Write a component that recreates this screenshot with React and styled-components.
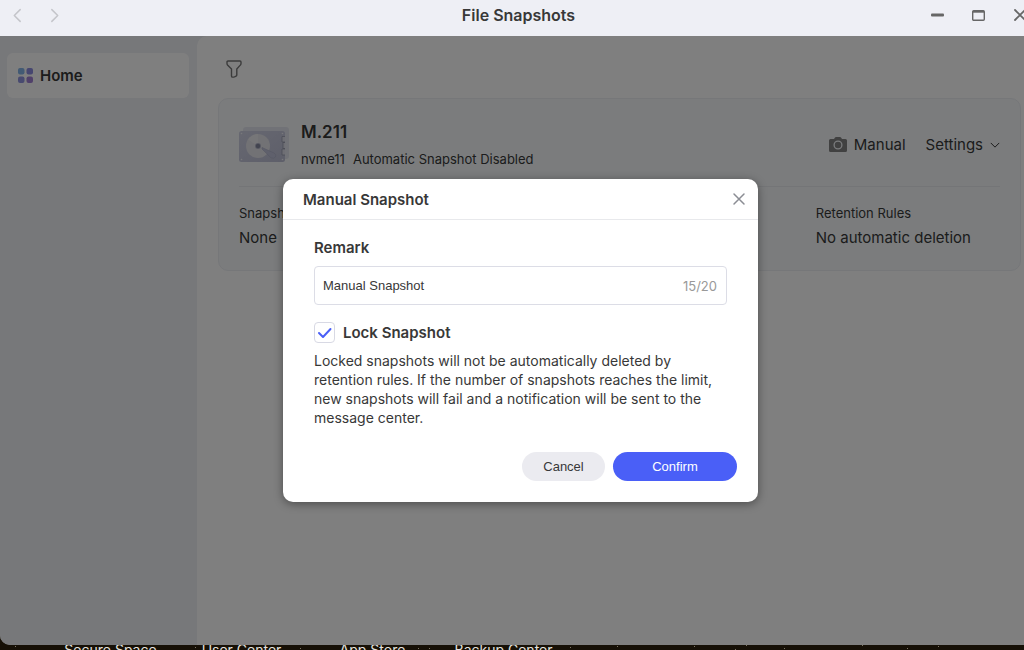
import { useState } from "react";
import styled, { createGlobalStyle } from "styled-components";

const GlobalStyle = createGlobalStyle`
  * {
    box-sizing: border-box;
  }
  body {
    margin: 0;
    font-family: Inter, "Noto Sans", sans-serif;
    font-size: 13px;
    color: #383838;
  }
  h1, h2, h3, p, dl, dd {
    margin: 0;
  }
  button {
    border: none;
    background: none;
    padding: 0;
    cursor: pointer;
    color: inherit;
  }
  svg {
    display: block;
    flex: none;
  }
`;

const Desktop = styled.div`
  display: flex;
  flex-direction: column;
  height: 100vh;
  overflow: hidden;
  background: #161006;
`;

/* the window is dragged a little past the right edge of the desktop */
const Window = styled.div`
  display: flex;
  flex-direction: column;
  flex: 1;
  min-height: 0;
  width: calc(100% + 17px);
  border-radius: 0 0 10px 10px;
  overflow: hidden;
`;

const TitleBar = styled.header`
  display: grid;
  grid-template-columns: 1fr auto 1fr;
  align-items: center;
  height: 36px;
  padding: 0 14px 6px 10px;
  background: #eeeff5;
`;
const BarGroup = styled.div`
  display: flex;
  align-items: center;
  gap: ${(props) => props.$gap};
  justify-content: ${(props) => (props.$end ? "flex-end" : "flex-start")};
`;
const BarButton = styled.button`
  color: ${(props) => props.$color || "#666"};
`;
const Title = styled.h1`
  font-size: 16px;
  font-weight: 600;
  line-height: 20px;
`;

const Body = styled.div`
  position: relative;
  display: flex;
  flex: 1;
  min-height: 0;
  background: #eef0f4;
`;
const Sidebar = styled.nav`
  width: 197px;
  padding: 17px 8px 0 7px;
`;
const NavItem = styled.a`
  display: flex;
  align-items: center;
  gap: 7px;
  height: 45px;
  padding: 0 11px;
  border-radius: 6px;
  background: #fff;
  color: #383838;
  font-size: 15px;
  font-weight: 600;
  text-decoration: none;
`;
const Content = styled.main`
  flex: 1;
  padding: 24px 20px 0 21px;
  border-radius: 10px 0 0 0;
  background: #fff;
`;
const FilterButton = styled.button`
  display: block;
  margin: 0 0 20px 8px;
  color: #777;
`;

const Card = styled.section`
  padding: 22px 20px;
  border: 1px solid #eceff3;
  border-radius: 10px;
  background: #f6f8fb;
`;
const CardHead = styled.div`
  display: flex;
  align-items: center;
  gap: 12px;
  padding-bottom: 17px;
  border-bottom: 1px solid #e8eaee;
`;
const Names = styled.div`
  display: flex;
  flex-direction: column;
  gap: 6px;
  flex: 1;
`;
const DiskName = styled.h2`
  font-size: 17px;
  font-weight: 600;
  line-height: 22px;
`;
const DiskInfo = styled.p`
  display: flex;
  gap: 8px;
  line-height: 20px;
`;
const Actions = styled.div`
  display: flex;
  gap: 20px;
`;
const ActionButton = styled.button`
  display: flex;
  align-items: center;
  gap: 7px;
  font-family: inherit;
  font-size: 15px;
  line-height: 20px;
`;
const Facts = styled.dl`
  display: grid;
  grid-template-columns: repeat(4, 1fr);
  gap: 8px;
  padding: 16px 0 0;
`;
const Fact = styled.div`
  grid-column: ${(props) => props.$column};
  display: flex;
  flex-direction: column;
  gap: 5px;
  line-height: 20px;
`;
const FactValue = styled.dd`
  font-size: 15px;
`;

const Mask = styled.div`
  position: absolute;
  inset: 0;
  display: flex;
  align-items: center;
  justify-content: center;
  background: rgba(0, 0, 0, 0.5);
`;
const Dialog = styled.form`
  width: 475px;
  border-radius: 10px;
  background: #fff;
  box-shadow: 0 2px 10px rgba(0, 0, 0, 0.4);
`;
const DialogHead = styled.div`
  display: flex;
  align-items: center;
  justify-content: space-between;
  height: 41px;
  padding: 0 12px 0 20px;
  border-bottom: 1px solid #e8e9ec;
`;
const DialogTitle = styled.h2`
  font-size: 15px;
  font-weight: 600;
`;
const DialogBody = styled.div`
  padding: 18px 31px 0;
`;
const FieldLabel = styled.label`
  display: block;
  font-size: 15px;
  font-weight: 600;
  line-height: 20px;
`;
const InputBox = styled.div`
  display: flex;
  align-items: center;
  height: 39px;
  margin: 8px 0 17px;
  padding: 0 9px 0 8px;
  border: 1px solid #dcdde6;
  border-radius: 4px;
`;
const TextInput = styled.input`
  flex: 1;
  min-width: 0;
  padding: 0;
  border: none;
  outline: none;
  color: #383838;
  font-family: "Liberation Sans", Arial, sans-serif;
  font-size: 13px;
`;
const Counter = styled.span`
  color: #999;
`;
const CheckRow = styled.div`
  display: flex;
  align-items: center;
  gap: 8px;
`;
const CheckBox = styled.span`
  display: grid;
  place-items: center;

  > * {
    grid-area: 1 / 1;
  }
  svg {
    pointer-events: none;
  }
  input:not(:checked) + svg {
    visibility: hidden;
  }
`;
const CheckInput = styled.input`
  appearance: none;
  width: 21px;
  height: 21px;
  margin: 0;
  border: 1px solid #d8d9e4;
  border-radius: 4px;
`;
const Hint = styled.p`
  margin-top: 8px;
  font-size: 14px;
  line-height: 19px;
`;
const DialogFoot = styled.div`
  display: flex;
  justify-content: flex-end;
  gap: 8px;
  padding: 25px 21px 21px;
`;
const PillButton = styled.button`
  width: ${(props) => (props.$primary ? "124px" : "83px")};
  height: 29px;
  border-radius: 15px;
  background: ${(props) => (props.$primary ? "#4a5ff7" : "#ebebf0")};
  color: ${(props) => (props.$primary ? "#fff" : "#383838")};
  font-family: "Liberation Sans", Arial, sans-serif;
  font-size: 13px;
`;

const Dock = styled.footer`
  position: relative;
  display: flex;
  height: 5px;
  padding-left: 45px;
  overflow: hidden;
`;
const DockLabel = styled.span`
  width: 131px;
  margin-top: -4px;
  color: #e4e2df;
  font-size: 14px;
  line-height: 18px;
  text-align: center;
`;
const Stars = styled.svg`
  position: absolute;
  inset: 0;
  width: 100%;
  height: 5px;
`;

const apps = ["Secure Space", "User Center", "App Store", "Backup Center"];
const stars = [
  [15, 1], [195, 2], [300, 3], [418, 3], [429, 3], [570, 2], [617, 1], [694, 1],
  [735, 4], [746, 0], [784, 3], [862, 0], [907, 3], [938, 1],
];

function Chevron({ d, size }) {
  return (
    <svg width={size} height={size} viewBox="0 0 14 14" fill="none" stroke="currentColor" strokeWidth="1.4" strokeLinecap="round" strokeLinejoin="round">
      <path d={d} />
    </svg>
  );
}

function Cross({ size, width }) {
  return (
    <svg width={size} height={size} viewBox="0 0 14 14" fill="none" stroke="currentColor" strokeWidth={width} strokeLinecap="round">
      <path d="M2 2l10 10M12 2L2 12" />
    </svg>
  );
}

function HomeIcon() {
  return (
    <svg width="15" height="15" viewBox="0 0 15 15">
      <rect width="6.5" height="6.5" rx="2" fill="#84b4e8" />
      <rect x="8.5" width="6.5" height="6.5" rx="2" fill="#8c8ce0" />
      <rect y="8.5" width="6.5" height="6.5" rx="2" fill="#9094e0" />
      <rect x="8.5" y="8.5" width="6.5" height="6.5" rx="2" fill="#a080d4" />
    </svg>
  );
}

function FilterIcon() {
  return (
    <svg width="16" height="18" viewBox="0 0 16 18" fill="none" stroke="currentColor" strokeWidth="1.4" strokeLinejoin="round">
      <path d="M2 1h12q1 0 1 1v1.6q0 .8-.5 1.3L10.800 9v6q0 .8-.7 1.100l-1.600.8q-3 .8-3-1V9L1.500 4.900Q1 4.400 1 3.600V2q0-1 1-1z" />
    </svg>
  );
}

function DiskIcon() {
  return (
    <svg width="50" height="36" viewBox="0 0 50 36">
      <defs>
        <linearGradient id="plate" x1="0" y1="0" x2="1" y2="1">
          <stop offset="0" stopColor="#ced0e2" />
          <stop offset="1" stopColor="#bcbed4" />
        </linearGradient>
      </defs>
      <rect x="4" y="0" width="46" height="32" rx="3" fill="#e3e5ee" />
      <rect x="0" y="4" width="46" height="31" rx="2.500" fill="url(#plate)" />
      <circle cx="19" cy="19" r="12" fill="#e4e4ea" />
      <path d="M19 19L9 12.500A12 12 0 0 1 19 7z" fill="#ececf0" />
      <circle cx="19" cy="19" r="3" fill="#b4b6ca" />
      <circle cx="19" cy="19" r="2.200" fill="#85889f" />
      <path d="M23 20.500l12 5.500q3 2 1.500 4t-4.500.8L23 22z" fill="#bfc1d8" stroke="#a9acc6" strokeWidth=".6" />
      <path d="M46 9.500h-3v5.500h3M46 15.500h-2v6h2M46 22h-3v6h3" fill="#dcdde8" stroke="#9093a6" strokeWidth=".7" />
      <g fill="#f0f0f6">
        <circle cx="2.500" cy="6.500" r=".8" />
        <circle cx="43.500" cy="6.500" r=".8" />
        <circle cx="2.500" cy="32.500" r=".8" />
        <circle cx="43.500" cy="32.500" r=".8" />
      </g>
    </svg>
  );
}

function CameraIcon() {
  return (
    <svg width="18" height="16" viewBox="0 0 18 16">
      <path d="M1.500 2H5l1-1.500q.3-.5 1-.5h4q.7 0 1 .5L13 2h3.500Q18 2 18 3.500v10q0 1.500-1.500 1.500h-15Q0 15 0 13.500v-10Q0 2 1.500 2z" fill="#828282" />
      <circle cx="9" cy="8" r="3.900" fill="none" stroke="#f6f8fb" strokeWidth="1.300" />
    </svg>
  );
}

function SnapshotDialog({ onClose }) {
  const [remark, setRemark] = useState("Manual Snapshot");
  const [locked, setLocked] = useState(true);

  const submit = (e) => {
    e.preventDefault();
    onClose();
  };

  return (
    <Mask>
      <Dialog role="dialog" aria-labelledby="dialog-title" onSubmit={submit}>
        <DialogHead>
          <DialogTitle id="dialog-title">Manual Snapshot</DialogTitle>
          <BarButton $color="#8b8d94" type="button" aria-label="Close dialog" onClick={onClose}>
            <Cross size={14} width={1.5} />
          </BarButton>
        </DialogHead>
        <DialogBody>
          <FieldLabel htmlFor="remark">Remark</FieldLabel>
          <InputBox>
            <TextInput id="remark" maxLength={20} value={remark} onChange={(e) => setRemark(e.target.value)} />
            <Counter>{remark.length}/20</Counter>
          </InputBox>
          <CheckRow>
            <CheckBox>
              <CheckInput id="lock" type="checkbox" checked={locked} onChange={(e) => setLocked(e.target.checked)} />
              <svg width="15" height="12" viewBox="0 0 15 12" fill="none" stroke="#4a5ff7" strokeWidth="2" strokeLinecap="round" strokeLinejoin="round">
                <path d="M2 6l4 4 7.500-8" />
              </svg>
            </CheckBox>
            <FieldLabel htmlFor="lock">Lock Snapshot</FieldLabel>
          </CheckRow>
          <Hint>
            Locked snapshots will not be automatically deleted by retention rules. If the number of snapshots
            reaches the limit, new snapshots will fail and a notification will be sent to the message center.
          </Hint>
        </DialogBody>
        <DialogFoot>
          <PillButton type="button" onClick={onClose}>Cancel</PillButton>
          <PillButton type="submit" $primary>Confirm</PillButton>
        </DialogFoot>
      </Dialog>
    </Mask>
  );
}

function App() {
  const [open, setOpen] = useState(true);

  return (
    <>
      <GlobalStyle />
      <Desktop>
        <Window>
          <TitleBar>
            <BarGroup $gap="22px">
              <BarButton $color="#c4c5ca" aria-label="Back"><Chevron size={15} d="M9.500 1.500L4 7l5.500 5.500" /></BarButton>
              <BarButton $color="#c4c5ca" aria-label="Forward"><Chevron size={15} d="M4.500 1.500L10 7l-5.500 5.500" /></BarButton>
            </BarGroup>
            <Title>File Snapshots</Title>
            <BarGroup $gap="28px" $end>
              <BarButton aria-label="Minimize">
                <svg width="13" height="12" viewBox="0 0 13 12"><rect y="4.500" width="13" height="3" rx="1" fill="currentColor" /></svg>
              </BarButton>
              <BarButton aria-label="Maximize">
                <svg width="13" height="11" viewBox="0 0 13 11" fill="none" stroke="currentColor">
                  <rect x=".7" y=".7" width="11.600" height="9.600" rx="1" strokeWidth="1.400" />
                  <path d="M1 1.700h11" strokeWidth="2" />
                </svg>
              </BarButton>
              <BarButton aria-label="Close"><Cross size={14} width={1.8} /></BarButton>
            </BarGroup>
          </TitleBar>
          <Body>
            <Sidebar>
              <NavItem href="#home"><HomeIcon />Home</NavItem>
            </Sidebar>
            <Content>
              <FilterButton aria-label="Filter"><FilterIcon /></FilterButton>
              <Card>
                <CardHead>
                  <DiskIcon />
                  <Names>
                    <DiskName>M.211</DiskName>
                    <DiskInfo><span>nvme11</span><span>Automatic Snapshot Disabled</span></DiskInfo>
                  </Names>
                  <Actions>
                    <ActionButton onClick={() => setOpen(true)}><CameraIcon />Manual</ActionButton>
                    <ActionButton>Settings<Chevron size={10} d="M1.500 4.500L7 10l5.500-5.500" /></ActionButton>
                  </Actions>
                </CardHead>
                <Facts>
                  <Fact $column={1}>
                    <dt>Snapshots</dt>
                    <FactValue>None</FactValue>
                  </Fact>
                  <Fact $column={4}>
                    <dt>Retention Rules</dt>
                    <FactValue>No automatic deletion</FactValue>
                  </Fact>
                </Facts>
              </Card>
            </Content>
            {open && <SnapshotDialog onClose={() => setOpen(false)} />}
          </Body>
        </Window>
        <Dock>
          <Stars aria-hidden="true" fill="#7d7563">
            {stars.map(([x, y]) => (
              <rect key={x} x={x} y={y} width="1" height="1" />
            ))}
          </Stars>
          {apps.map((name) => (
            <DockLabel key={name}>{name}</DockLabel>
          ))}
        </Dock>
      </Desktop>
    </>
  );
}

export default App;
